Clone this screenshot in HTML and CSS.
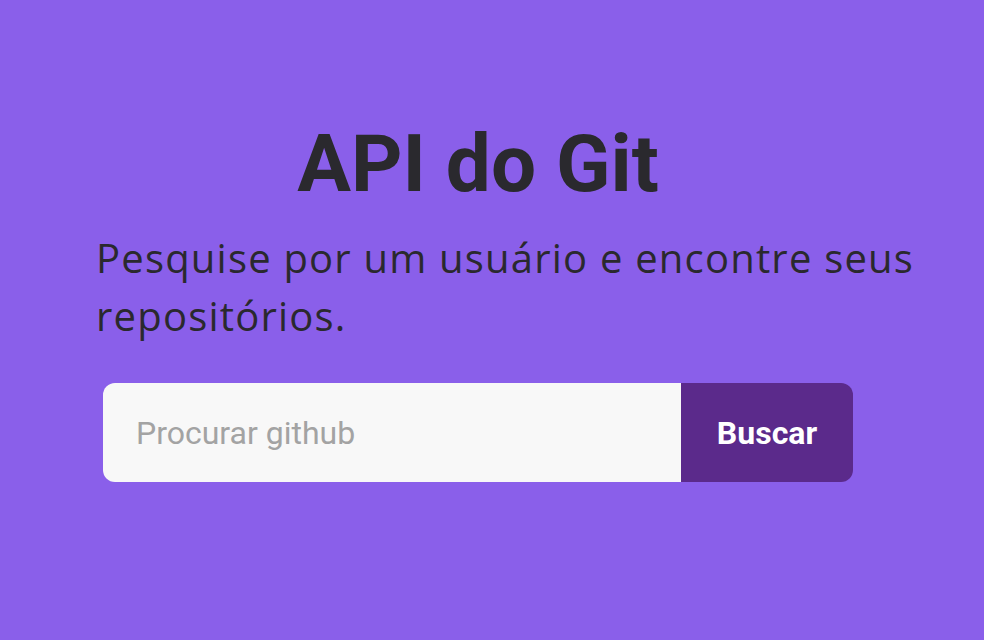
FILE: index.html
```html
<!DOCTYPE html>
<html lang="pt-BR">
<head>
<meta charset="utf-8">
<title>API do Git</title>
<link rel="stylesheet" href="styles.css">
</head>
<body>
<main class="page">
  <section class="hero">
    <h1 class="title">API do Git</h1>
    <p class="subtitle">Pesquise por um usuário e encontre seus repositórios.</p>
    <form class="search" onsubmit="return false">
      <input class="search-input" type="text" placeholder="Procurar github">
      <button class="search-button" type="submit">Buscar</button>
    </form>
  </section>
</main>
</body>
</html>
```

FILE: styles.css
```css
html, body {
  margin: 0;
  padding: 0;
  height: 100%;
}
body {
  background: #8a5fea;
  color: #2a292e;
  font-family: Roboto, "Liberation Sans", sans-serif;
}
.page {
  padding-top: 112px;
  padding-left: 96px;
}
.hero {
  width: 764px;
  display: flex;
  flex-direction: column;
}
.title {
  margin: 0;
  text-align: center;
  font-family: Roboto, sans-serif;
  font-weight: 700;
  font-size: 80px;
  line-height: 104px;
  letter-spacing: 0;
}
.subtitle {
  margin: 13px 0 0 0;
  width: 860px;
  font-family: "Open Sans", "DejaVu Sans", sans-serif;
  font-weight: 400;
  font-size: 40px;
  letter-spacing: 1.2px;
  line-height: 58px;
}
.search {
  margin: 38px 0 0 7px;
  width: 750px;
  height: 99px;
  display: flex;
  border-radius: 12px;
  overflow: hidden;
}
.search-input {
  flex: 1;
  border: none;
  outline: none;
  background: #f8f8f8;
  padding: 0 0 0 33px;
  font-family: Roboto, sans-serif;
  font-size: 32px;
  color: #333;
}
.search-input::placeholder {
  color: #a3a3a3;
}
.search-button {
  width: 172px;
  border: none;
  background: #5b2a8b;
  color: #ffffff;
  font-family: Roboto, sans-serif;
  font-weight: 700;
  font-size: 32px;
  cursor: pointer;
}
```
